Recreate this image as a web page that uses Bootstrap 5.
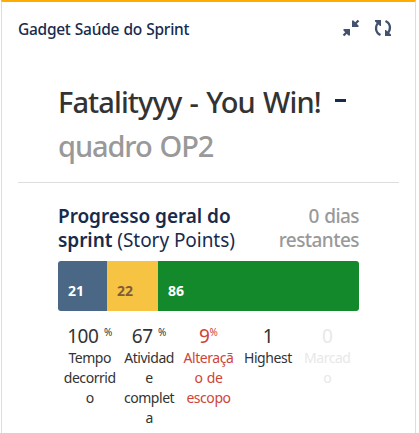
<!DOCTYPE html>
<html lang="pt-BR">
<head>
<meta charset="utf-8">
<meta name="viewport" content="width=device-width, initial-scale=1">
<title>Gadget Saúde do Sprint</title>
<link rel="stylesheet" href="https://cdn.jsdelivr.net/npm/bootstrap@5.3.0/dist/css/bootstrap.min.css">
<style>
body{font-family:"Segoe UI","Noto Sans","Open Sans",sans-serif;background:#fff;color:#333;overflow:hidden;height:433px}
.gadget{width:415px;height:433px;margin-left:1px;border:1px solid #ddd;border-top:2px solid #ffab00;border-bottom:0}
.gadget-head{height:52px;padding:0 23px 0 16px;color:#172b4d}
.gadget-name{font-size:15.5px;font-weight:500;letter-spacing:-.28px;line-height:24px;padding-top:1px;word-spacing:.6px}
.sprint-head{height:129px;margin:0 16px;padding:26px 0 0 40px;border-bottom:1px solid #ddd}
.sprint-title{font-size:29px;font-weight:500;line-height:44px;letter-spacing:-.9px;word-spacing:1.6px}
.sprint-title.muted{letter-spacing:-1.1px;line-height:43px}
.dash{width:11px;height:3px;background:#172b4d;margin:0 0 4px 14px}
.muted{color:#999}
.progress-area{width:301px;margin-left:56px}
.progress-title{font-size:19px;line-height:24px;letter-spacing:-.05px;color:#172b4d;padding-top:21px;height:78px}
.progress-title b{font-weight:600}
.progress-title .muted{font-size:19px;font-weight:500;letter-spacing:-.55px;word-spacing:1px}
.stack{height:50px;border-radius:3px;font-size:14px;font-weight:700;color:#fff}
.stack>div{padding:20px 0 0 10px;line-height:20px}
.done-no{background:#4a6785}.doing{background:#f6c342;color:#815b3a}.done-yes{background:#14892c}
.metrics{padding:13px 0 0 2px}
.metric{width:59.4px;font-size:14px;line-height:20px;letter-spacing:-.45px;word-spacing:1px}
.num{font-size:19px;line-height:24px;height:24px}
.num sup{font-size:10px;top:-7px;line-height:0;vertical-align:baseline;letter-spacing:0}
.danger{color:#d04437}.faded{color:#e8e8e8}
</style>
</head>
<body>
<main class="gadget">
<header class="gadget-head d-flex align-items-center justify-content-between">
<span class="gadget-name text-nowrap">Gadget Saúde do Sprint</span>
<div class="d-flex align-items-center" style="gap:14px">
<svg width="18" height="18" viewBox="0 0 18 18" fill="none" stroke="#42526e" stroke-width="2.3"><path d="M16.500 1.500 11 7M1.500 16.500 7 11"/><path fill="#42526e" stroke="none" d="M10 1.500h1.500L16.500 6.500V8H10zM8 16.500H6.500L1.500 11.500V10H8z"/></svg>
<svg width="18" height="18" viewBox="0 0 18 18" fill="none" stroke="#42526e" stroke-width="2.300"><path d="M6.500 16C1 13.500.700 7 5 3M11.500 2c5.500 2.500 5.800 9 1.500 13"/><path fill="#42526e" stroke="none" d="M1 1h6v6H6L4 5 1 2.500zM17 17h-6v-6h1l2 2 3 2.500z"/></svg>
</div>
</header>
<section class="sprint-head">
<div class="sprint-title text-nowrap d-flex align-items-center"><span>Fatalityyy - You Win!</span><i class="dash"></i></div>
<div class="sprint-title muted">quadro OP2</div>
</section>
<section class="progress-area">
<div class="progress-title d-flex justify-content-between text-nowrap">
<div><b>Progresso geral do</b><br><b>sprint</b> (Story Points)</div>
<div class="muted text-end">0 dias<br>restantes</div>
</div>
<div class="stack d-flex overflow-hidden"><div class="done-no" style="width:49px">21</div><div class="doing" style="width:51px">22</div><div class="done-yes flex-fill">86</div></div>
<div class="metrics d-flex text-center text-nowrap">
<div class="metric"><div class="num">100 <sup>%</sup></div>Tempo<br>decorrid<br>o</div>
<div class="metric"><div class="num">67 <sup>%</sup></div>Atividad<br>e<br>complet<br>a</div>
<div class="metric danger"><div class="num">9<sup>%</sup></div>Alteraçã<br>o de<br>escopo</div>
<div class="metric"><div class="num">1</div>Highest</div>
<div class="metric faded"><div class="num">0</div>Marcad<br>o</div>
</div>
</section>
</main>
<script src="https://cdn.jsdelivr.net/npm/bootstrap@5.3.0/dist/js/bootstrap.bundle.min.js"></script>
</body>
</html>
